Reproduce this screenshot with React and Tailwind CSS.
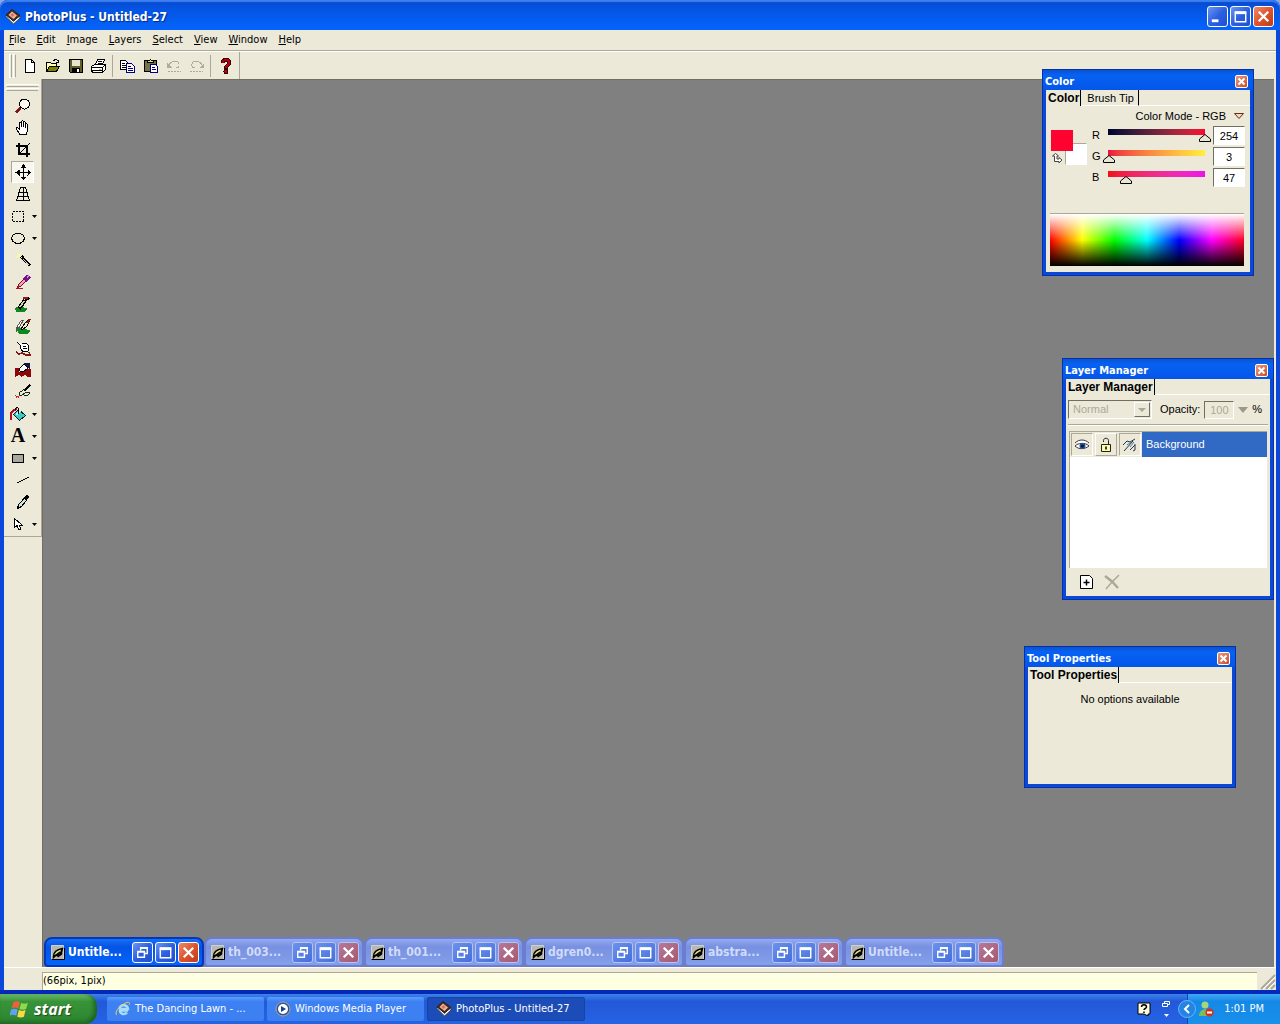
import { useState } from 'react'
import clsx from 'clsx'

const menus = ['File', 'Edit', 'Image', 'Layers', 'Select', 'View', 'Window', 'Help']

const toolbarGroups = [
  ['New', 'Open', 'Save', 'Print'],
  ['Copy', 'Paste', 'Undo', 'Redo'],
  ['Help'],
]

const tools = [
  { name: 'Zoom' },
  { name: 'Pan' },
  { name: 'Crop' },
  { name: 'Move' },
  { name: 'Deform' },
  { name: 'Marquee', more: true },
  { name: 'Ellipse', more: true },
  { name: 'Wand' },
  { name: 'Picker' },
  { name: 'Brush' },
  { name: 'Clone' },
  { name: 'Smudge' },
  { name: 'Eraser' },
  { name: 'Effect' },
  { name: 'Fill', more: true },
  { name: 'Text', more: true },
  { name: 'Shape', more: true },
  { name: 'Line' },
  { name: 'Knife' },
  { name: 'Node', more: true },
]

const documents = ['Untitle...', 'th_003...', 'th_001...', 'dgren0...', 'abstra...', 'Untitle...']

const icons = {
  New: <path d="M3.500 1.500h6l3 3v10h-9z M9.500 1.500v3h3" fill="#fff" stroke="#000" />,
  Open: (
    <>
      <path d="M1.500 13.500v-9h4l1 1h5v3" fill="#ffffb0" stroke="#000" />
      <path d="M1.500 13.500l3-5h10l-3 5z" fill="#808000" stroke="#000" />
      <path d="M8.500 3c1-2 4-2 5 1M13.500 1.500v3h-3" fill="none" stroke="#000" />
    </>
  ),
  Save: (
    <>
      <path d="M1.500 1.500h13v13h-12l-1-1z" fill="#606020" stroke="#000" />
      <path d="M4 2h8v6H4z" fill="#e8e6d0" />
      <path d="M4 10h8v4H4z" fill="#000" />
      <path d="M9 11h2v3H9z" fill="#fff" />
    </>
  ),
  Print: (
    <>
      <path d="M4.500 6.500l2-5h7l-2 5z" fill="#fff" stroke="#000" />
      <path d="M7 3.500h4M6.500 5.500h4" stroke="#000" />
      <path d="M.5 8.500l3-2h11v5l-3 3h-10l-1-2z" fill="#fff" stroke="#000" />
      <path d="M1 9.500h10l3-2M1 12.500h10M11.500 9.500v5" fill="none" stroke="#000" />
      <path d="M8 11h2" stroke="#c0c000" />
    </>
  ),
  Copy: (
    <>
      <path d="M.5 2.500h5l3 3v6h-8z" fill="#fff" stroke="#000" />
      <path d="M2 5.500h3M2 7.500h4M2 9.500h4" stroke="#000" />
      <path d="M6.500 5.500h5l3 3v6h-8z" fill="#fff" stroke="#000080" />
      <path d="M8 8.500h3M8 10.500h5M8 12.500h5" stroke="#000080" />
    </>
  ),
  Paste: (
    <>
      <path d="M1.500 2.500h12v11h-12z" fill="#73734a" stroke="#000" />
      <path d="M4.500 4.500v-2h2l1-1 1 1h2v2z" fill="#e8e450" stroke="#000" />
      <path d="M7.500 6.500h5l2 2v6h-7z" fill="#fff" stroke="#000080" />
      <path d="M9 9.500h3M9 11.500h4" stroke="#000080" />
    </>
  ),
  Undo: (
    <>
      <path d="M3 7c3-5 9-5 10-1 .5 3-1 4-3 4" fill="none" stroke="#b0ac9c" />
      <path d="M1 5v5h5z" fill="#b0ac9c" />
      <path d="M2 13.500h13" stroke="#aca899" strokeDasharray="2 1" />
    </>
  ),
  Redo: (
    <>
      <path d="M13 7c-3-5-9-5-10-1-.5 3 1 4 3 4" fill="none" stroke="#b0ac9c" />
      <path d="M15 5v5h-5z" fill="#b0ac9c" />
      <path d="M1 13.500h13" stroke="#aca899" strokeDasharray="2 1" />
    </>
  ),
  Help: (
    <>
      <path d="M4.500 5c0-4 7-4 7-.5 0 3-3.500 2.500-3.500 6" fill="none" stroke="#3c0000" strokeWidth="4" />
      <path d="M4.500 5c0-4 7-4 7-.5 0 3-3.500 2.500-3.500 5.500" fill="none" stroke="#b00010" strokeWidth="2" />
      <circle cx="8" cy="13.500" r="2" fill="#b00010" stroke="#3c0000" />
    </>
  ),
  Zoom: (
    <>
      <circle cx="9.500" cy="6" r="5" fill="#fbf8ee" stroke="#000" />
      <path d="M5.500 10L1 14.500" stroke="#801818" strokeWidth="2.500" />
    </>
  ),
  Pan: (
    <path
      d="M5 14.500L1.500 9c-.5-2 1-2 2-.5l1 1V3.500c0-1.500 2-1.500 2 0V7 2c0-1.500 2-1.500 2 0v5-4c0-1.500 2-1.500 2 0v4.500-2.500c0-1.500 2-1.500 2 0V11l-1.500 3.500z"
      fill="#fff"
      stroke="#000"
    />
  ),
  Crop: (
    <>
      <path d="M4 1v11h11M1 4h11v11" fill="none" stroke="#000" strokeWidth="2" />
      <path d="M4 12L15 1" stroke="#000" />
    </>
  ),
  Move: (
    <>
      <path d="M8.500 2v13M2 8.500h13" stroke="#000" />
      <path d="M8.500 0l3 4h-6zM8.500 16.500l3-4h-6zM.5 8.500l4-3v6zM16.500 8.500l-4-3v6z" fill="#000" />
    </>
  ),
  Deform: (
    <path d="M5.500 1.500h5l4 13h-13zM8.500 1.500v13M4 6.500h8M2.500 10.500h11" fill="none" stroke="#000" />
  ),
  Marquee: <path d="M2.500 3.500h11v10h-11z" fill="none" stroke="#000" strokeDasharray="2 1" />,
  Ellipse: (
    <path d="M5.500 3.500h5l3 2 1 2.500-1 3-3 2h-5l-3-2-1-3 1-2.500z" fill="none" stroke="#000" />
  ),
  Wand: (
    <>
      <path d="M6 4l9 9.500" stroke="#000" strokeWidth="3" />
      <path d="M8 7l5.500 6" stroke="#d8d4c4" />
      <path d="M2 1l5 5M6 1L3 5M1 4h5" stroke="#fffb98" />
    </>
  ),
  Picker: (
    <>
      <path d="M1 14.500h7M2 14l2-4 2 2z" stroke="#b01020" fill="#b01020" />
      <path d="M3.500 12.500l7-7" stroke="#801028" strokeWidth="4" />
      <path d="M4 12l6-6" stroke="#f4a0b0" strokeWidth="2" />
      <path d="M10 6.500l4-4.500" stroke="#781090" strokeWidth="5" />
      <path d="M12 3l2-1" stroke="#d090e0" strokeWidth="2" />
    </>
  ),
  Brush: (
    <>
      <path d="M0 12l5-2 8 3-3 2.500H1z" fill="#108820" />
      <path d="M4 12.500l6-8" stroke="#000" strokeWidth="4" />
      <path d="M5 11l4-6" stroke="#d8d8a0" strokeWidth="1.500" />
      <path d="M10 5l4-3.500" stroke="#000" strokeWidth="2.500" />
      <path d="M8 1.500h5" stroke="#a01818" strokeWidth="2" />
    </>
  ),
  Clone: (
    <>
      <path d="M1 10h6l9 3-3 2.500H4z" fill="#108820" />
      <path d="M1 10v4M2.500 8l4-6h2l-4 7-3 2z" fill="#fff" stroke="#555" />
      <path d="M6 11l4-6 3-3h2l-3 6-5 4z" fill="#f4f0c8" stroke="#000" />
      <path d="M12 5l3-4" stroke="#802010" strokeWidth="2" />
    </>
  ),
  Smudge: (
    <>
      <path d="M2 2l4 4c-1 3 1 6 4 6l3-1V5l-2-2-4 1M8 6h3M8 8l4 1" fill="#fff" stroke="#000" />
      <path d="M1 12l3 2 3-1 4 2h4l-1-3" fill="none" stroke="#801818" strokeWidth="1.500" />
    </>
  ),
  Eraser: (
    <>
      <path d="M0 6h4v4l4-2 8-1v8h-4l-2-2-4 2-2-2-4 2z" fill="#8c0808" />
      <path d="M4 7l5-5 4 4-5 4-3-1z" fill="#fff" stroke="#000" />
      <path d="M8 1h7v7z" fill="#101848" />
    </>
  ),
  Effect: (
    <>
      <path d="M15 1L9 7" stroke="#000" strokeWidth="2.500" />
      <path d="M10 5l-5 3-1 4 3-1 5-3 3 1-2 2-4 1" fill="none" stroke="#102818" />
      <path d="M0 11l5 4M5 11l-5 4" stroke="#d82020" strokeDasharray="1 1" />
    </>
  ),
  Fill: (
    <>
      <path d="M1 14V7l3-3 3-1" fill="none" stroke="#b01020" strokeWidth="2" />
      <path d="M3.500 8.500l5-5 7 6-6 5z" fill="#40c8c8" stroke="#002020" />
      <path d="M5 8l4-4 2 1-4 5z" fill="#b8f8f4" />
      <path d="M8.500 8V3c-1-3-3-2-3 1" fill="none" stroke="#000" />
    </>
  ),
  Text: (
    <text x="8" y="14" textAnchor="middle" fontFamily="Liberation Serif, serif" fontSize="20" fontWeight="700">
      A
    </text>
  ),
  Shape: <path d="M2.500 4.500h11v8h-11z" fill="#aaa89c" stroke="#000" />,
  Line: <path d="M2 11L14 5" stroke="#000" />,
  Knife: (
    <>
      <path d="M8 7l5-5" stroke="#000" strokeWidth="4" />
      <path d="M2.500 14.500l1-4 6-6 2 2-5 6z" fill="#cde8de" stroke="#000" />
    </>
  ),
  Node: <path d="M4.500 2.500v9l2.500-2 2 4.500 2-1-2-4h3z" fill="#fff" stroke="#000" />,
}

function Icon({ name, className = 'size-4' }) {
  return (
    <svg
      viewBox="0 0 16 16"
      shapeRendering="crispEdges"
      className={clsx('shrink-0 overflow-visible', className)}
      aria-hidden="true"
    >
      {icons[name]}
    </svg>
  )
}

function AppLogo() {
  return (
    <svg viewBox="0 0 16 16" className="size-4 shrink-0" aria-hidden="true">
      <path d="M1 7.500l7.500 7.500L15 9V6.500L8.500 12 2 6z" fill="#fff" stroke="#444" />
      <path d="M1 6l6-5.500 8 6L8.500 12z" fill="#4c2c24" stroke="#222" />
      <path d="M3.500 6L7 2.500l5 4L8.500 10z" fill="#f4b098" />
      <path d="M5.500 6l2-2 2 2-2 2z" fill="#c87860" />
    </svg>
  )
}

function DocIcon() {
  return (
    <svg viewBox="0 0 14 16" className="h-4 w-3.5 shrink-0" aria-hidden="true">
      <path d="M.5 1.500h12v14H.5z" fill="#b8b8b0" stroke="#d0d0c8" />
      <path d="M.5 15.500h13V4" fill="none" stroke="#000" />
      <path d="M2.500 12.500c0-4 3-7 9-8-1 5-4 7-7 7l-2 2z" fill="#e8e070" stroke="#000" strokeWidth="1.500" />
      <path d="M3 12.500l6-4.500M10.500 6v4l-4 3" fill="none" stroke="#000" strokeWidth="1.500" />
    </svg>
  )
}

const glyphs = {
  Minimize: <path d="M4 13h7v3H4z" fill="#fff" />,
  Restore: (
    <path d="M8 8V5h7v6h-3M8 5.500h7M5 9h7v6H5zM5 9.500h7" fill="none" stroke="#fff" strokeWidth="1.500" />
  ),
  Maximize: (
    <>
      <path d="M4.500 5.500h11v10h-11z" fill="none" stroke="#fff" strokeWidth="1.500" />
      <path d="M4 6h12" stroke="#fff" strokeWidth="3" />
    </>
  ),
  Close: <path d="M5 5l10 10M15 5L5 15" stroke="#fff" strokeWidth="2.500" />,
}

function CaptionButton({ kind, faded }) {
  return (
    <button
      aria-label={kind}
      className={clsx(
        'size-[21px] shrink-0 rounded-[3px] border',
        faded ? 'border-[#b4c4f4]' : 'border-white',
        kind === 'Close' && !faded && 'bg-linear-to-br from-[#ec8a68] via-[#e0522c] to-[#c03c14]',
        kind === 'Close' && faded && 'bg-linear-to-br from-[#b4789c] to-[#a8586c]',
        kind !== 'Close' && !faded && 'bg-linear-to-br from-[#6c96f0] via-[#2c60e0] to-[#1c50d0]',
        kind !== 'Close' && faded && 'bg-linear-to-br from-[#6c90ec] to-[#4470dc]'
      )}
    >
      <svg viewBox="0 0 20 20" className="size-full" aria-hidden="true">
        {glyphs[kind]}
      </svg>
    </button>
  )
}

function Panel({ title, tabs, className, children }) {
  return (
    <section
      className={clsx(
        'absolute flex w-[212px] flex-col border-x-4 border-b-4 border-[#0a48d8] bg-[#ece9d8] font-["Liberation_Sans",Arial,sans-serif] text-[11px] outline-1 -outline-offset-1 outline-[#0530a8]',
        className
      )}
    >
      <header className="-mx-[3px] flex h-[21px] shrink-0 items-center justify-between bg-linear-to-b from-[#0c50c8] via-[#0662f4] via-30% to-[#0456e8] pt-1 pr-[5px] pl-0.5">
        <h2 className='font-["DejaVu_Sans_Condensed","DejaVu_Sans",sans-serif] text-[11px] leading-4 font-bold text-white'>
          {title}
        </h2>
        <button
          aria-label={`Close ${title}`}
          className="size-[13px] rounded-xs border border-white bg-linear-to-br from-[#e89880] to-[#c84c28]"
        >
          <svg viewBox="0 0 11 11" className="size-full" aria-hidden="true">
            <path d="M2.500 2.500l6 6M8.500 2.500l-6 6" stroke="#fff" strokeWidth="2" />
          </svg>
        </button>
      </header>
      <div className="flex h-4 shrink-0 items-stretch">
        {tabs.map((tab, i) => (
          <button
            key={tab}
            className={clsx(
              'border-r border-black leading-4',
              i === 0 ? 'pr-px pl-0.5 text-xs font-bold' : 'border-b border-b-white pr-1 pl-1.5'
            )}
          >
            {tab}
          </button>
        ))}
        <div className="flex-1 border-b border-white" />
      </div>
      {children}
    </section>
  )
}

function ChannelRow({ label, value, track, onChange }) {
  return (
    <div className="flex h-[21px] items-center">
      <label htmlFor={`slider-${label}`} className="w-4">
        {label}
      </label>
      <div className="relative h-[13px] flex-1">
        <div className={clsx('h-1.5', track)} />
        <svg
          viewBox="0 0 12 9"
          className="absolute top-1 h-[9px] w-3 -translate-x-1/2"
          style={{ left: `${(value / 255) * 100}%` }}
          aria-hidden="true"
        >
          <path d="M6 1.500L11.500 6v2.500H.5V6z" fill="#e8e6d4" stroke="#000" />
        </svg>
        <input
          id={`slider-${label}`}
          type="range"
          min="0"
          max="255"
          value={value}
          onChange={(e) => onChange(Number(e.target.value))}
          className="absolute inset-0 w-full opacity-0"
        />
      </div>
      <input
        aria-label={`${label} value`}
        value={value}
        onChange={(e) => onChange(Number(e.target.value) || 0)}
        className="ml-2 h-[19px] w-8 border border-t-[#716f64] border-r-white border-b-white border-l-[#716f64] bg-white text-center"
      />
    </div>
  )
}

function ColorPanel() {
  const [rgb, setRgb] = useState([254, 3, 47])
  const set = (i) => (v) => setRgb(rgb.map((c, k) => (k === i ? Math.min(v, 255) : c)))

  return (
    <Panel title="Color" tabs={['Color', 'Brush Tip']} className="top-[69px] right-[26px] h-[207px]">
      <button className="flex items-center gap-2 self-end pt-0.5 pr-1.5 leading-4">
        Color Mode - RGB
        <svg viewBox="0 0 10 6" className="h-1.5 w-2.5" aria-hidden="true">
          <path d="M.5.5h9L5 5.500z" fill="#f4d8c0" stroke="#5c3010" />
        </svg>
      </button>
      <div className="flex pt-px pr-[5px] pl-[5px]">
        <div className="grid w-[41px] grid-cols-[14px_8px_14px] grid-rows-[13px_8px_14px] content-start pt-[5px]">
          <div className="z-10 col-span-2 col-start-1 row-span-2 row-start-1 bg-[#fe032f]" />
          <div className="col-span-2 col-start-2 row-span-2 row-start-2 border border-t-[#aca899] border-r-white border-b-white border-l-[#aca899] bg-white" />
          <svg viewBox="0 0 12 12" className="col-start-1 row-start-3 size-3 self-center" aria-hidden="true">
            <path d="M1.500 4l3-2.500 3 2.500H6v3h2V5.500L11 8l-3 3V9.500H3.500V4z" fill="#fff" stroke="#444" />
          </svg>
        </div>
        <div className="flex-1">
          <ChannelRow label="R" value={rgb[0]} onChange={set(0)} track="bg-linear-to-r from-[#00032f] to-[#fe032f]" />
          <ChannelRow label="G" value={rgb[1]} onChange={set(1)} track="bg-linear-to-r from-[#e8103c] to-[#fef03c]" />
          <ChannelRow label="B" value={rgb[2]} onChange={set(2)} track="bg-linear-to-r from-[#f01010] to-[#f010e8]" />
        </div>
      </div>
      <div className="mt-auto mr-1.5 mb-1.5 ml-1 border-t border-[#aca899] bg-[linear-gradient(to_right,#f00,#ff0,#0f0,#0ff,#00f,#f0f,#f02)]">
        <div className="h-[52px] bg-[linear-gradient(to_bottom,#fff,rgba(255,255,255,0)_50%,rgba(0,0,0,0)_50%,#000)]" />
      </div>
    </Panel>
  )
}

function LayerPanel() {
  return (
    <Panel title="Layer Manager" tabs={['Layer Manager']} className="top-[358px] right-1.5 h-[242px]">
      <div className="flex items-center pt-[5px] pr-2 pl-0.5">
        <div className="relative">
          <select
            aria-label="Blend mode"
            disabled
            className="block h-[19px] w-[84px] appearance-none border border-t-[#716f64] border-r-white border-b-white border-l-[#716f64] pl-1 text-[#aca899] opacity-100"
          >
            <option>Normal</option>
          </select>
          <div className="pointer-events-none absolute top-0.5 right-0.5 flex h-[15px] w-4 items-center justify-center border border-white border-r-[#716f64] border-b-[#716f64] bg-[#ece9d8]">
            <svg viewBox="0 0 8 4" className="h-1 w-2" aria-hidden="true">
              <path d="M0 0h8L4 4z" fill="#aca899" />
            </svg>
          </div>
        </div>
        <label htmlFor="opacity" className="pl-2">
          Opacity:
        </label>
        <input
          id="opacity"
          disabled
          defaultValue="100"
          className="ml-1 h-[18px] w-[30px] border border-t-[#716f64] border-r-white border-b-white border-l-[#716f64] text-center text-[#aca899]"
        />
        <svg viewBox="0 0 10 6" className="ml-1 h-1.5 w-2.5" aria-hidden="true">
          <path d="M0 0h10L5 6z" fill="#9c998c" />
        </svg>
        <span className="ml-auto">%</span>
      </div>
      <hr className="mx-0.5 mt-[5px] mb-[5px] border-t border-b border-t-[#aca899] border-b-white" />
      <div className="mr-[3px] ml-[3px] flex-1 border-t border-l border-[#aca899] bg-white">
        <div className="flex h-[25px] bg-[#ece9d8]">
          <button aria-label="Visible" className="m-px flex w-[22px] items-center justify-center border border-t-[#aca899] border-r-white border-b-white border-l-[#aca899]">
            <svg viewBox="0 0 16 16" className="size-4" aria-hidden="true">
              <path d="M1 6c4-4 10-4 14 0M1 9c3-3 10-4 14 0-4 3-10 4-14 0z" fill="#fff" stroke="#40303c" />
              <circle cx="8.500" cy="9" r="3" fill="#1c5494" />
              <circle cx="8.500" cy="9" r="1.500" fill="#001030" />
            </svg>
          </button>
          <button aria-label="Lock" className="m-px flex w-[22px] items-center justify-center border border-t-white border-r-[#aca899] border-b-[#aca899] border-l-white">
            <svg viewBox="0 0 16 16" className="size-4" aria-hidden="true">
              <path d="M5.500 5V3.500c0-3 5-3 5 0v4" fill="none" stroke="#222" />
              <path d="M3.500 7.500h9v7h-9z" fill="#fffaa8" stroke="#222" />
              <path d="M8 9.500v3" stroke="#000" strokeWidth="1.500" />
            </svg>
          </button>
          <button aria-label="Transparency" className="m-px flex w-[22px] items-center justify-center border border-t-[#aca899] border-r-white border-b-white border-l-[#aca899]">
            <svg viewBox="0 0 16 16" className="size-4" aria-hidden="true">
              <path d="M1 8l4-4 3 1 5-3M2 14L11 4M8 13l5-5M13 7v6l-2 1" fill="none" stroke="#283448" />
              <path d="M5 8l4-3M8 10l4-5" stroke="#3c80b0" />
            </svg>
          </button>
          <div className="flex flex-1 items-center bg-[#316ac5] pl-1 text-white">Background</div>
        </div>
      </div>
      <div className="flex h-7 shrink-0 items-center gap-2.5 pl-3">
        <button aria-label="Add layer">
          <svg viewBox="0 0 16 16" className="size-4" aria-hidden="true">
            <path d="M2.500 1.500h9l3 3v10h-12z" fill="#fff" stroke="#000" />
            <path d="M8.500 5.500v6M5.500 8.500h6" stroke="#000" strokeWidth="1.500" />
          </svg>
        </button>
        <button aria-label="Delete layer" disabled>
          <svg viewBox="0 0 16 16" className="size-4" aria-hidden="true">
            <path d="M1 2l7 5.500 6 6.500" fill="none" stroke="#aca899" strokeWidth="2.500" />
            <path d="M15 1L8 8l-6 7" fill="none" stroke="#aca899" strokeWidth="1.500" />
          </svg>
        </button>
      </div>
    </Panel>
  )
}

function Taskbar() {
  return (
    <footer className='flex h-[30px] shrink-0 items-stretch bg-linear-to-b from-[#3c84e8] via-[#2458d8] via-25% to-[#2464e4] font-["DejaVu_Sans_Condensed","DejaVu_Sans",sans-serif] text-[11px] text-white'>
      <button className="flex w-[97px] items-center gap-1 rounded-r-xl bg-linear-to-b from-[#6cbc6c] via-[#389438] via-25% to-[#2c8430] pl-2.5 shadow-[inset_-3px_-2px_4px_#1c6424]">
        <svg viewBox="0 0 18 18" className="size-5" aria-hidden="true">
          <path d="M3 3c2-1.500 4-1 6 0L7.500 8.500c-2-1-4-1-6 0z" fill="#f0603c" />
          <path d="M10 3.500c2 1 4 1 6 0L14.500 9c-2 1-4 1-6 0z" fill="#8cdc50" />
          <path d="M1 9.500c2-1 4-1 6 0L5.500 15c-2-1-4-1-6 0z" fill="#60a0f8" />
          <path d="M8 10c2 1 4 1 6 0l-1.500 6c-2 1-4 1-6 0z" fill="#fcd844" />
        </svg>
        <span className='font-["Open_Sans",sans-serif] text-base leading-5 font-bold italic [text-shadow:1px_1px_1px_#1c4c1c]'>
          start
        </span>
      </button>
      <nav className="flex flex-1 gap-[3px] pt-[3px] pb-[3px] pl-2.5">
        <button className="flex w-[157px] items-center gap-1 rounded-xs bg-linear-to-b from-[#5c9cfc] via-[#3c80f4] via-20% to-[#3c80f0] pl-2">
          <svg viewBox="0 0 16 16" className="size-4" aria-hidden="true">
            <path d="M13 9.500H5c0 4 5 4.500 7 2M4.500 8c0-5 8-5 8.500 0H4.500" fill="none" stroke="#a8dcfc" strokeWidth="2.500" />
            <path d="M2 14c-3-1 1-8 6-10.500 4-3 8-3 6 .5" fill="none" stroke="#f4cc54" />
          </svg>
          The Dancing Lawn - ...
        </button>
        <button className="flex w-[157px] items-center gap-1 rounded-xs bg-linear-to-b from-[#5c9cfc] via-[#3c80f4] via-20% to-[#3c80f0] pl-2">
          <svg viewBox="0 0 16 16" className="size-4" aria-hidden="true">
            <circle cx="8" cy="8" r="7" fill="#2458a8" stroke="#c8a080" />
            <circle cx="8" cy="8" r="5" fill="#fff" />
            <path d="M6 5l5 3-5 3z" fill="#1c3c9c" />
          </svg>
          Windows Media Player
        </button>
        <button className="flex w-[158px] items-center gap-1 rounded-xs border border-[#1444a4] bg-[#1c4cb8] pl-2">
          <AppLogo />
          PhotoPlus - Untitled-27
        </button>
      </nav>
      <div className="flex items-center gap-2.5 pr-0.5">
        <svg viewBox="0 0 14 14" className="size-3.5" aria-hidden="true">
          <path d="M1 1h12v11h-2v2l-4-2H1z" fill="#fffce0" stroke="#000" />
          <path d="M4.500 5c0-3 5-3 5 0 0 1.500-2.500 1.500-2.500 3M7 9.500v1.500" fill="none" stroke="#000" strokeWidth="1.500" />
        </svg>
        <svg viewBox="0 0 10 18" className="h-[18px] w-2.5" aria-hidden="true">
          <path d="M3.500 3V1.500h5v3H7M1.500 3.500h5v3h-5z" fill="none" stroke="#fff" />
          <path d="M3 14h5l-2.500 3z" fill="#fff" />
        </svg>
      </div>
      <div className="ml-3.5 flex items-center border-l border-[#0c48b8] bg-linear-to-b from-[#40a8f4] via-[#1488e4] via-25% to-[#1890ec] pr-4">
        <button aria-label="Show hidden icons" className="-ml-2.5">
          <svg viewBox="0 0 18 18" className="size-[18px]" aria-hidden="true">
            <circle cx="9" cy="9" r="8.500" fill="#2484e4" stroke="#64b4fc" />
            <path d="M11 5L7 9l4 4" fill="none" stroke="#fff" strokeWidth="2" />
          </svg>
        </button>
        <svg viewBox="0 0 16 16" className="ml-0.5 size-4" aria-hidden="true">
          <circle cx="7" cy="4" r="3.500" fill="#a8d47c" />
          <path d="M1 15c0-9 12-9 12 0z" fill="#7cbc5c" />
          <circle cx="11.500" cy="11.500" r="4" fill="#d83020" />
          <path d="M9 11.500h5" stroke="#fff" strokeWidth="2" />
        </svg>
        <time className="ml-2.5">1:01 PM</time>
      </div>
    </footer>
  )
}

export default function App() {
  const [tool, setTool] = useState('Move')

  return (
    <div className='relative flex h-screen flex-col overflow-hidden bg-[#8ca4e4] font-["DejaVu_Sans_Condensed","DejaVu_Sans",sans-serif] text-[11px] text-black select-none'>
      <div className="flex min-h-0 flex-1 flex-col rounded-t-lg border-b-4 border-[#0428b8] bg-[#0a48dc]">
        <header className="flex h-[30px] shrink-0 items-center gap-1 rounded-t-lg bg-linear-to-b from-[#0848c8] via-[#0454e4] via-30% to-[#0464fc] pt-[3px] pr-1.5 pl-[5px] shadow-[inset_0_2px_1px_#3c80f4]">
          <AppLogo />
          <h1 className="flex-1 text-xs font-bold text-white [text-shadow:1px_1px_1px_#0c2c80]">
            PhotoPlus - Untitled-27
          </h1>
          <div className="flex gap-0.5">
            <CaptionButton kind="Minimize" />
            <CaptionButton kind="Maximize" />
            <CaptionButton kind="Close" />
          </div>
        </header>

        <div className="mx-1 flex min-h-0 flex-1 flex-col bg-[#ece9d8]">
          <nav className="flex h-[21px] shrink-0 items-center gap-[11px] border-b border-[#aca899] pb-px pl-[5px]">
            {menus.map((m) => (
              <button key={m} className="leading-4">
                <span className="underline">{m[0]}</span>
                {m.slice(1)}
              </button>
            ))}
          </nav>
          <div className="flex h-7 shrink-0 border-t border-white">
            <div className="flex items-center border-r border-[#aca899] pr-0.5 pl-[5px]">
              <div className="mr-0.5 flex h-6 gap-px">
                <div className="w-[3px] border border-t-white border-r-[#aca899] border-b-white border-l-white" />
                <div className="w-[3px] border border-t-white border-r-[#aca899] border-b-white border-l-white" />
              </div>
              {toolbarGroups.map((group, i) => (
                <div key={i} className={clsx('flex', i > 0 && 'ml-0.5 border-l border-[#aca899] pl-[3px]')}>
                  {group.map((name) => (
                    <button
                      key={name}
                      aria-label={name}
                      className="flex h-[22px] w-[23px] items-center justify-center"
                    >
                      <Icon name={name} />
                    </button>
                  ))}
                </div>
              ))}
            </div>
          </div>

          <div className="flex min-h-0 flex-1">
            <aside className="w-[38px] shrink-0">
              <div className="border-r border-b border-[#aca899] pt-[5px] pb-px">
                <div className="mx-0.5 flex flex-col gap-px pb-1">
                  <div className="h-[3px] border border-t-white border-r-white border-b-[#aca899] border-l-white" />
                  <div className="h-[3px] border border-t-white border-r-white border-b-[#aca899] border-l-white" />
                </div>
                {tools.map(({ name, more }) => (
                  <div key={name} className={clsx('flex h-[22px] items-center', more ? 'pl-1.5' : 'justify-center')}>
                    <button
                      aria-label={name}
                      onClick={() => setTool(name)}
                      className={clsx(
                        'flex h-[22px] items-center justify-center',
                        more ? 'w-4' : 'w-[23px]',
                        tool === name &&
                          'border border-t-[#aca899] border-r-white border-b-white border-l-[#aca899] bg-[#f8f6ee]'
                      )}
                    >
                      <Icon name={name} />
                    </button>
                    {more && (
                      <button aria-label={`More ${name} tools`} className="ml-1.5">
                        <svg viewBox="0 0 5 3" className="h-[3px] w-[5px]" aria-hidden="true">
                          <path d="M0 0h5L2.500 3z" fill="#000" />
                        </svg>
                      </button>
                    )}
                  </div>
                ))}
              </div>
            </aside>
            <main className="mr-0.5 flex flex-1 items-end border-t border-l border-[#716f64] bg-[#808080] pl-px">
              {documents.map((doc, i) => (
                <div
                  key={i}
                  className={clsx(
                    'flex h-[30px] w-40 items-center gap-0.5 rounded-t-lg rounded-b-sm border-2 pr-[3px] pl-[5px]',
                    i === 0
                      ? 'border-[#0438b8] bg-linear-to-b from-[#1870f8] via-[#0454e4] via-30% to-[#0464fc] text-white'
                      : 'border-[#6c7cd0] bg-linear-to-b from-[#94acf0] via-[#7890e0] via-30% to-[#84a0ec] text-[#d0dcfa]'
                  )}
                >
                  <DocIcon />
                  <span className="flex-1 pl-px text-xs font-bold whitespace-nowrap">{doc}</span>
                  <CaptionButton kind="Restore" faded={i > 0} />
                  <CaptionButton kind="Maximize" faded={i > 0} />
                  <CaptionButton kind="Close" faded={i > 0} />
                </div>
              ))}
            </main>
          </div>

          <div className="flex h-[23px] shrink-0 items-end border-t border-white pt-[3px] pl-[38px]">
            <output className="h-[18px] flex-1 border-t border-l border-[#aca899] bg-[#ffffe1] leading-4">
              (66pix, 1pix)
            </output>
            <svg viewBox="0 0 19 18" className="h-[18px] w-[19px]" aria-hidden="true">
              <path d="M4 17L18 3M9 17l9-9M14 17l4-4" stroke="#aca899" strokeWidth="2" />
              <path d="M6 17L18 5M11 17l7-7" stroke="#fff" />
            </svg>
          </div>
        </div>
      </div>

      <Taskbar />

      <ColorPanel />
      <LayerPanel />
      <Panel title="Tool Properties" tabs={['Tool Properties']} className="top-[646px] right-[44px] h-[142px]">
        <p className="pt-2 text-center leading-4">No options available</p>
      </Panel>
    </div>
  )
}
